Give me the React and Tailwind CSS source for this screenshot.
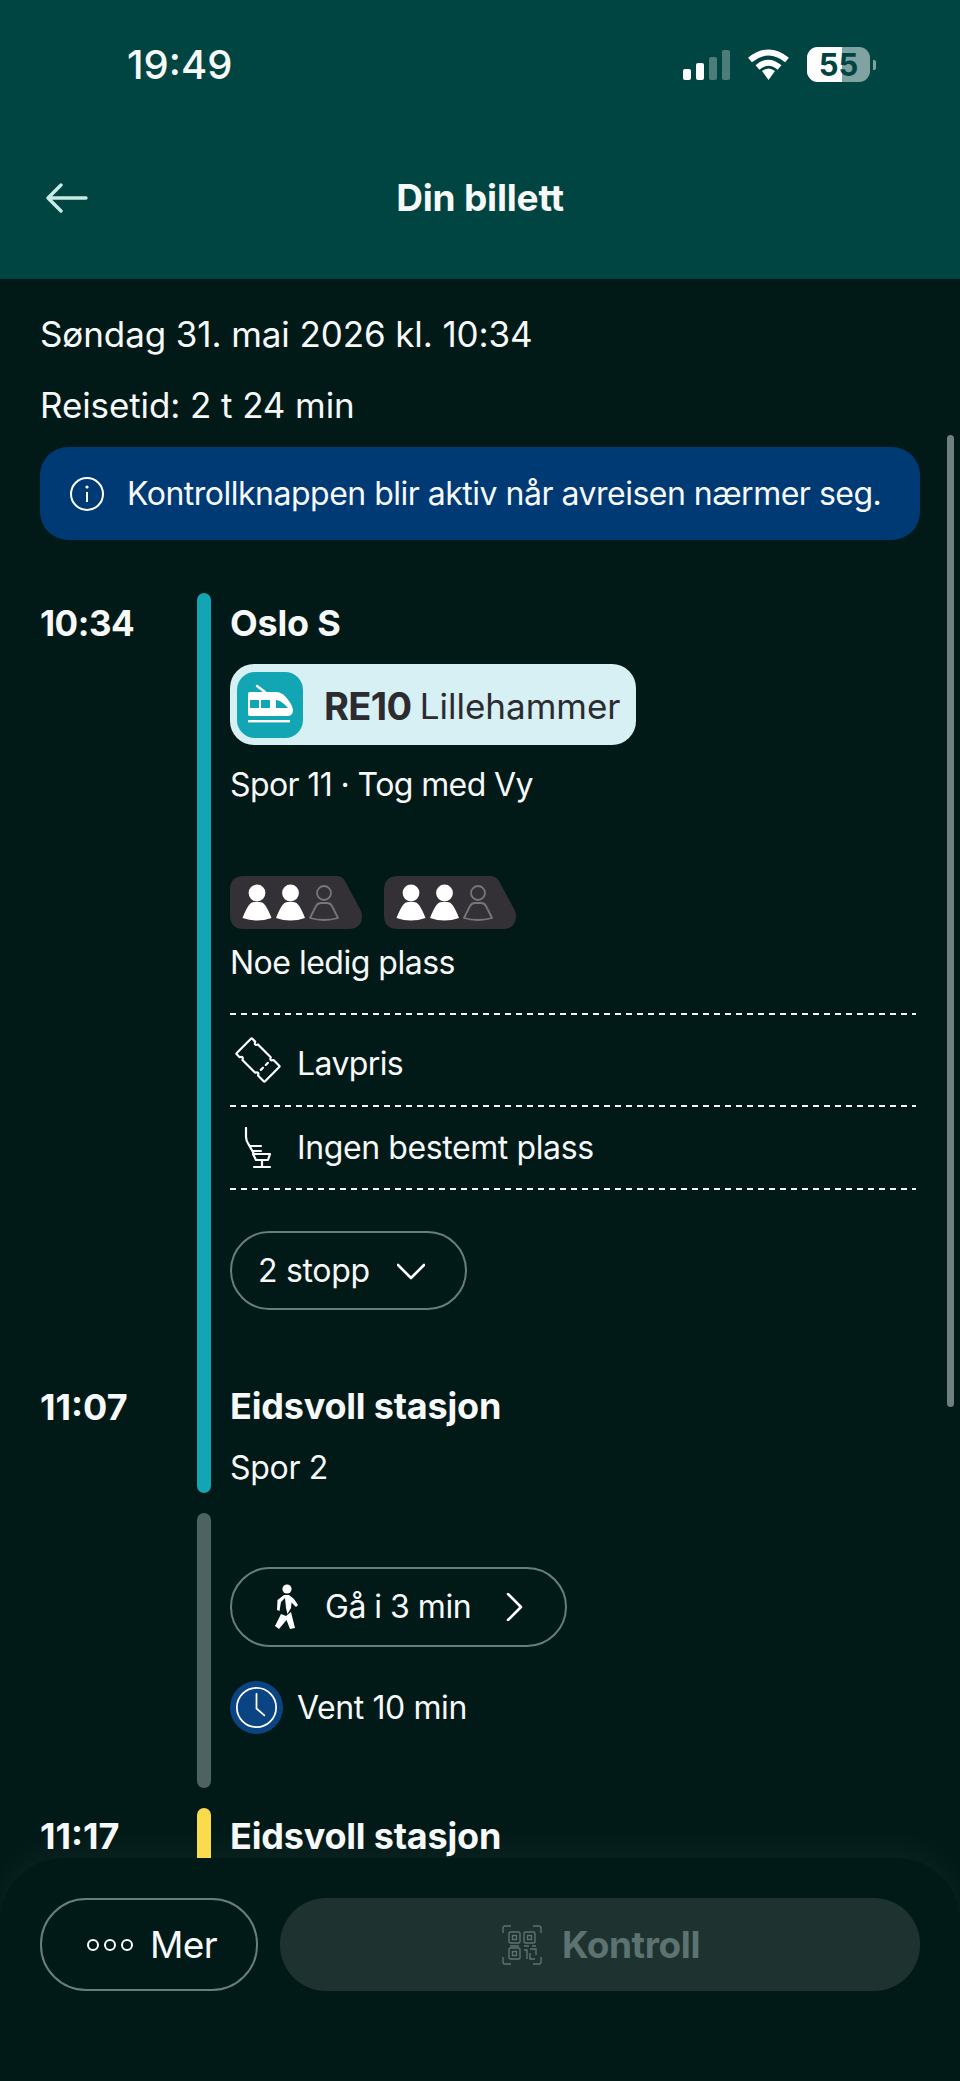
import React from "react";

const Chevron = ({ d, className }) => (
  <svg viewBox="0 0 28 28" className={className} fill="none" stroke="white" strokeWidth="2.6" strokeLinecap="round" strokeLinejoin="round">
    <path d={d} />
  </svg>
);

const TrainIcon = () => (
  <svg viewBox="0 0 66 66" className="w-[66px] h-[66px]">
    <rect width="66" height="66" rx="18" fill="#12a5b3" />
    <path d="M20 14 L28 20" stroke="white" strokeWidth="2.4" strokeLinecap="round" />
    <path d="M11 22 Q11 20 13 20 H39 Q46 20 52 29 Q56 35 56 38 Q56 44 50 44 H13 Q11 44 11 42 Z" fill="white" />
    <rect x="13" y="28" width="9" height="8" fill="#12a5b3" />
    <rect x="24" y="28" width="9" height="8" fill="#12a5b3" />
    <path d="M39 28 Q44 28 51 36 H39 Z" fill="#12a5b3" />
    <rect x="11" y="48" width="42" height="2.4" fill="white" />
  </svg>
);

const Person = ({ x, outline }) =>
  outline ? (
    <g transform={`translate(${x} 0)`} fill="none" stroke="#77767a" strokeWidth="1.8">
      <circle cx="15" cy="17" r="7" />
      <path d="M1 42 L7 30 Q8.5 27 12 27 H18 Q21.5 27 23 30 L29 42 Q15 46 1 42 Z" strokeLinejoin="round" />
    </g>
  ) : (
    <g transform={`translate(${x} 0)`} fill="white">
      <circle cx="15" cy="17" r="8.4" />
      <path d="M0.5 42 Q4 33 7 29 Q9 26 12 26 H18 Q21 26 23 29 Q26 33 29.5 42 Q15 47 0.5 42 Z" />
    </g>
  );

const Wagon = () => (
  <svg viewBox="0 0 132 53" className="w-[132px] h-[53px]">
    <path d="M14 0 H106 Q112 0 115 5 L130 33 Q132 36 132 40 Q132 53 118 53 H14 Q0 53 0 39 V14 Q0 0 14 0 Z" fill="#333135" />
    <Person x={12} />
    <Person x={45.5} />
    <Person x={79} outline />
  </svg>
);

const TicketIcon = () => (
  <svg viewBox="0 0 46 46" className="w-[46px] h-[46px]" fill="none" stroke="white" strokeWidth="2.2" strokeLinejoin="round">
    <g transform="rotate(45 23 23)">
      <path d="M3 13 Q3 12 4 12 H8 Q10 16 12 12 H30 Q32 16 34 12 H42 Q43 12 43 13 V33 Q43 34 42 34 H34 Q32 30 30 34 H12 Q10 30 8 34 H4 Q3 34 3 33 Z" />
      <path d="M32 18 V21 M32 25 V28" strokeLinecap="round" />
    </g>
  </svg>
);

const SeatIcon = () => (
  <svg viewBox="0 0 28 42" className="w-[28px] h-[42px]" fill="none" stroke="white" strokeWidth="2.2" strokeLinecap="round" strokeLinejoin="round">
    <path d="M2 1 V10 Q2 14 5 18 L10 27" />
    <path d="M6 19 H17 M9 24 H17" />
    <path d="M9 27 H26 L24 33 H12 Z" />
    <path d="M18 33 V40 M10 40 H26" />
  </svg>
);

const WalkIcon = () => (
  <svg viewBox="0 0 26 46" className="w-[26px] h-[46px]" fill="white">
    <circle cx="14" cy="5" r="4.6" />
    <path d="M11 11 H16 L21 15 L25 21 L23 23 L18.5 18.5 L18 24 L14.5 30 L13 24 L12 14 L8 18 L6.5 27 L4 26 L4.5 16 Z" />
    <path d="M8 30 L13 32 L18 28 L22 44 L17 45 L13.5 36 L6 45 L2 42 Z" />
  </svg>
);

const ClockIcon = () => (
  <svg viewBox="0 0 54 54" className="w-[53px] h-[53px] shrink-0">
    <circle cx="27" cy="27" r="27" fill="#0b4482" />
    <circle cx="27" cy="27" r="20" fill="none" stroke="white" strokeWidth="1.8" />
    <path d="M27 13 V28 L35 35" fill="none" stroke="white" strokeWidth="1.8" strokeLinecap="round" />
  </svg>
);

const QrIcon = () => (
  <svg viewBox="0 0 40 40" className="w-[40px] h-[40px]" fill="none" stroke="#5d7371" strokeWidth="1.4">
    <path d="M1 8 V3 Q1 1 3 1 H9 M31 1 H37 Q39 1 39 3 V8 M1 32 V37 Q1 39 3 39 H9 M31 39 H37 Q39 39 39 37 V32" />
    <rect x="7" y="7" width="11" height="11" rx="1.5" />
    <rect x="22" y="7" width="11" height="11" rx="1.5" />
    <rect x="7" y="23" width="11" height="11" rx="1.5" />
    <rect x="10.5" y="10.5" width="4" height="4" />
    <rect x="25.5" y="10.5" width="4" height="4" />
    <rect x="10.5" y="26.5" width="4" height="4" />
    <path d="M8 21 H17 M22 21 H27 M30 21 H34 M22 25 H25 V34 M28 24 H34 V30 M28 28 V34 H33" />
  </svg>
);

const Dashes = () => (
  <div className="h-[2px] w-[686px] bg-[repeating-linear-gradient(90deg,#f2f5f4_0_6px,transparent_6px_11px)]" />
);

const App = () => {
  return (
    <div className="relative h-[2081px] w-[960px] overflow-hidden bg-[#011a18] text-[#f7f8f8] font-['Inter','Liberation_Sans',sans-serif]">
      {/* statut + titre */}
      <header className="h-[279px] bg-[#004541]">
        <div className="flex h-[170px] items-start justify-between pl-[127px] pr-[84px] pt-[43px]">
          <span className="text-[40px] font-medium leading-[44px]">19:49</span>
          <div className="flex items-center gap-[17px] pt-[4px]">
            <div className="flex h-[30px] items-end gap-[5px]">
              <div className="h-[11px] w-[8px] rounded-[2px] bg-white" />
              <div className="h-[17px] w-[8px] rounded-[2px] bg-white" />
              <div className="h-[23px] w-[8px] rounded-[2px] bg-white/30" />
              <div className="h-[30px] w-[8px] rounded-[2px] bg-white/30" />
            </div>
            <svg viewBox="0 0 43 32" className="h-[32px] w-[43px]" fill="none" stroke="white" strokeWidth="6">
              <path d="M3 11 Q21.5 -4 40 11" />
              <path d="M10.5 18.5 Q21.5 9 32.5 18.5" />
              <path d="M15 22 L21.5 31 L28 22 Q21.5 17 15 22 Z" fill="white" stroke="none" />
            </svg>
            <div className="flex items-center gap-[3px]">
              <div className="relative h-[35px] w-[63px] overflow-hidden rounded-[11px] bg-white/50">
                <div className="absolute inset-y-0 left-0 w-[35px] bg-white" />
                <span className="absolute inset-0 text-center text-[31px] font-bold leading-[35px] text-[#004541]">55</span>
              </div>
              <div className="h-[10px] w-[3px] rounded-r-[2px] bg-white/50" />
            </div>
          </div>
        </div>
        <div className="relative mt-[-2px] flex h-[60px] items-center justify-center">
          <svg viewBox="0 0 42 30" className="absolute left-[46px] h-[30px] w-[42px]" fill="none" stroke="#c8ebe5" strokeWidth="3.4" strokeLinecap="round" strokeLinejoin="round">
            <path d="M40 15 H2 M15 2 L2 15 L15 28" />
          </svg>
          <h1 className="text-[37px] font-bold tracking-[-0.2px]">Din billett</h1>
        </div>
      </header>

      <main className="px-[40px]">
        <p className="mt-[33px] text-[35px] leading-[44px] tracking-[-0.1px]">Søndag 31. mai 2026 kl. 10:34</p>
        <p className="mt-[27px] text-[35px] leading-[44px] tracking-[-0.1px]">Reisetid: 2 t 24 min</p>

        <div className="mt-[20px] flex h-[93px] items-center gap-[23px] rounded-[28px] bg-[#003a75] pl-[30px]">
          <svg viewBox="0 0 34 34" className="h-[34px] w-[34px]" fill="none" stroke="white" strokeWidth="2">
            <circle cx="17" cy="17" r="16" />
            <path d="M17 15 V25" />
            <circle cx="17" cy="10" r="1.6" fill="white" stroke="none" />
          </svg>
          <p className="text-[32px] tracking-[-0.5px]">Kontrollknappen blir aktiv når avreisen nærmer seg.</p>
        </div>

        {/* Oslo S - Eidsvoll */}
        <section className="mt-[53px] flex">
          <div className="flex w-[157px] flex-col justify-between pb-[64px] pt-[8px]">
            <span className="text-[35px] font-bold leading-[44px] tracking-[-0.5px]">10:34</span>
            <span className="text-[36px] font-bold leading-[44px]">11:07</span>
          </div>
          <div className="w-[14px] rounded-full bg-[#12a5b3]" />
          <div className="flex-1 pl-[19px] pt-[8px]">
            <h2 className="text-[36px] font-bold leading-[44px] tracking-[-0.2px]">Oslo S</h2>
            <div className="mt-[19px] flex h-[81px] w-[406px] items-center rounded-[24px] bg-[#d6f0f4] pl-[7px]">
              <TrainIcon />
              <span className="ml-[21px] pt-[3px] text-[38px] font-bold tracking-[-0.6px] text-[#2b2b30]">RE10</span>
              <span className="ml-[8px] pt-[3px] text-[35px] text-[#2b2b30]">Lillehammer</span>
            </div>
            <p className="mt-[18px] text-[32px] leading-[44px] tracking-[-0.6px]">Spor 11 · Tog med Vy</p>
            <div className="mt-[69px] flex gap-[22px]">
              <Wagon />
              <Wagon />
            </div>
            <p className="mt-[12px] text-[32px] leading-[44px] tracking-[-0.5px]">Noe ledig plass</p>
            <div className="mt-[28px]">
              <Dashes />
            </div>
            <div className="flex h-[90px] items-center gap-[16px] pl-[5px]">
              <TicketIcon />
              <span className="pt-[8px] text-[32px] tracking-[-0.6px]">Lavpris</span>
            </div>
            <Dashes />
            <div className="flex h-[81px] items-center pl-[14px]">
              <SeatIcon />
              <span className="ml-[25px] text-[32px] tracking-[-0.4px]">Ingen bestemt plass</span>
            </div>
            <Dashes />
            <button className="mt-[41px] flex h-[79px] w-[237px] items-center rounded-full border-2 border-[#6a7d7b] pl-[26px]">
              <span className="text-[32px] tracking-[-0.3px]">2 stopp</span>
              <Chevron d="M1 8 L14 21 L27 8" className="ml-[27px] h-[28px] w-[28px]" />
            </button>
            <h2 className="mt-[74px] text-[36px] font-bold leading-[44px] tracking-[-0.2px]">Eidsvoll stasjon</h2>
            <p className="mt-[18px] text-[32px] leading-[44px] tracking-[-0.3px]">Spor 2</p>
            <div className="h-[3px]" />
          </div>
        </section>

        {/* Overgang */}
        <section className="mt-[20px] flex">
          <div className="w-[157px]" />
          <div className="w-[14px] rounded-full bg-[#4e6361]" />
          <div className="flex-1 pl-[19px] pt-[54px] pb-[54px]">
            <button className="flex h-[80px] w-[337px] items-center rounded-full border-2 border-[#6a7d7b] pl-[41px]">
              <WalkIcon />
              <span className="ml-[26px] text-[32px] tracking-[-0.5px]">Gå i 3 min</span>
              <Chevron d="M7 1 L20 14 L7 27" className="ml-[30px] h-[28px] w-[28px]" />
            </button>
            <div className="mt-[34px] flex h-[53px] items-center gap-[14px]">
              <ClockIcon />
              <span className="text-[32px] tracking-[-0.4px]">Vent 10 min</span>
            </div>
          </div>
        </section>

        {/* Eidsvoll - videre */}
        <section className="mt-[20px] flex">
          <div className="w-[157px] pt-[6px]">
            <span className="text-[36px] font-bold leading-[44px]">11:17</span>
          </div>
          <div className="h-[120px] w-[14px] rounded-t-full bg-[#fadb4b]" />
          <div className="pl-[19px] pt-[6px]">
            <h2 className="text-[36px] font-bold leading-[44px] tracking-[-0.2px]">Eidsvoll stasjon</h2>
          </div>
        </section>
      </main>

      {/* scrollbar */}
      <div className="absolute left-[947px] top-[435px] h-[972px] w-[7px] rounded-full bg-[#8a9a9a]/80" />

      {/* bas de page */}
      <footer className="absolute inset-x-0 bottom-0 top-[1858px] rounded-t-[64px] bg-[#011a18] shadow-[0_-10px_36px_rgba(255,255,255,0.045)]">
        <div className="flex gap-[22px] px-[40px] pt-[40px]">
          <button className="flex h-[93px] w-[218px] items-center rounded-[46px] border-2 border-[#6a7d7b] pl-[45px]">
            <svg viewBox="0 0 46 14" className="h-[14px] w-[46px]" fill="none" stroke="white" strokeWidth="2">
              <circle cx="6" cy="7" r="5" />
              <circle cx="23" cy="7" r="5" />
              <circle cx="40" cy="7" r="5" />
            </svg>
            <span className="ml-[17px] text-[37px] tracking-[-0.6px]">Mer</span>
          </button>
          <button className="flex h-[93px] flex-1 items-center justify-center gap-[20px] rounded-[46px] bg-[#1e3230] pl-[2px]">
            <QrIcon />
            <span className="text-[37px] font-bold tracking-[-0.4px] text-[#5d7371]">Kontroll</span>
          </button>
        </div>
      </footer>
    </div>
  );
};

export default App;
